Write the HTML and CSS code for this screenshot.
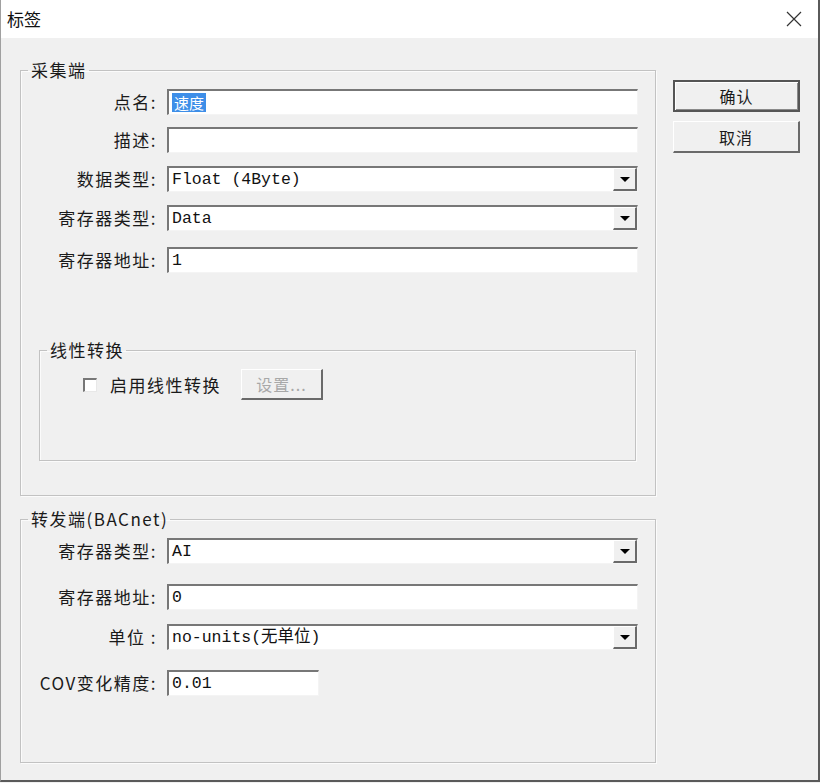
FILE: index.html
```html
<!DOCTYPE html>
<html lang="zh-CN">
<head>
<meta charset="utf-8">
<title>标签</title>
<link rel="stylesheet" href="styles.css">
</head>
<body>
<div class="window">
  <div class="titlebar">
    <span class="title">标签</span>
    <svg class="close" width="16" height="16" viewBox="0 0 16 16"><path d="M1 1 L15 15 M15 1 L1 15" stroke="#333" stroke-width="1.2" fill="none"/></svg>
  </div>
  <div class="content">
    <div class="main">
      <fieldset class="group g1">
        <legend>采集端</legend>
        <div class="rows rows1">
          <label class="lbl">点名:</label>
          <div class="field"><span class="sel">速度</span></div>
          <label class="lbl">描述:</label>
          <div class="field"></div>
          <label class="lbl">数据类型:</label>
          <div class="field combo"><span class="val">Float (4Byte)</span><span class="drop"><i class="tri"></i></span></div>
          <label class="lbl">寄存器类型:</label>
          <div class="field combo"><span class="val">Data</span><span class="drop"><i class="tri"></i></span></div>
          <label class="lbl">寄存器地址:</label>
          <div class="field"><span class="val">1</span></div>
        </div>
        <fieldset class="group inner">
          <legend>线性转换</legend>
          <div class="checkrow">
            <span class="checkbox"></span>
            <span class="checklabel">启用线性转换</span>
            <span class="btn disabled">设置...</span>
          </div>
        </fieldset>
      </fieldset>
      <fieldset class="group g2">
        <legend>转发端(BACnet)</legend>
        <div class="rows rows2">
          <label class="lbl">寄存器类型:</label>
          <div class="field combo"><span class="val">AI</span><span class="drop"><i class="tri"></i></span></div>
          <label class="lbl">寄存器地址:</label>
          <div class="field"><span class="val">0</span></div>
          <label class="lbl">单位 :</label>
          <div class="field combo"><span class="val">no-units(无单位)</span><span class="drop"><i class="tri"></i></span></div>
          <label class="lbl">COV变化精度:</label>
          <div class="field short"><span class="val">0.01</span></div>
        </div>
      </fieldset>
    </div>
    <div class="side">
      <span class="btn default">确认</span>
      <span class="btn">取消</span>
    </div>
  </div>
</div>
</body>
</html>
```

FILE: styles.css
```css
* { box-sizing: border-box; }
html, body { margin: 0; padding: 0; background: #f0f0f0; }
body {
  font-family: "Noto Sans CJK SC", "Noto Sans", sans-serif;
  color: #1a1a1a;
}
.window {
  width: 820px;
  height: 782px;
  border-left: 1px solid #a0a0a0;
  border-right: 2px solid #5a5a5a;
  border-bottom: 2px solid #5a5a5a;
  background: #f0f0f0;
  display: flex;
  flex-direction: column;
}
.titlebar {
  height: 38px;
  background: #ffffff;
  display: flex;
  align-items: center;
  justify-content: space-between;
  padding: 0 16px 0 6px;
  flex: none;
}
.title { font-size: 17px; line-height: 20px; color: #111; }
.close { display: block; }
.content {
  display: flex;
  padding-left: 19px;
  padding-top: 22px;
}
.main { width: 636px; flex: none; }
.group {
  margin: 0;
  padding: 0;
  border: 1px solid #c2c2c2;
  box-shadow: inset 1px 1px 0 #fbfbfb, 1px 1px 0 #fbfbfb;
  min-width: 0;
}
.group legend {
  margin-left: 7px;
  padding: 0 2px 0 3px;
  font-size: 17px;
  line-height: 20px;
  letter-spacing: 1.5px;
  color: #1a1a1a;
}
.g1 { height: 436px; }
.g2 { height: 254px; margin-top: 13px; }
.rows {
  display: grid;
  grid-template-columns: 136px 471px;
  column-gap: 10px;
  align-items: start;
}
.rows1 { padding-top: 9px; grid-template-rows: 38px 39px 39px 42px 26px; }
.rows2 { padding-top: 9px; grid-template-rows: 46px 40px 46px 26px; }
.lbl {
  text-align: right;
  font-size: 17px;
  line-height: 26px;
  letter-spacing: 1.5px;
  color: #1a1a1a;
  white-space: pre;
  margin-right: 0;
}
.field {
  height: 26px;
  background: #fff;
  border-top: 2px solid #777;
  border-left: 2px solid #777;
  border-bottom: 1px solid #f4f4f4;
  border-right: 1px solid #f4f4f4;
  display: flex;
  align-items: center;
  padding-left: 3px;
  position: relative;
  font-family: "Liberation Mono", "Noto Sans CJK SC", monospace;
  font-size: 16.5px;
  color: #111;
}
.field.short { width: 152px; }
.val { white-space: pre; line-height: 20px; }
.sel {
  background: #3d8ee8;
  color: #fff;
  font-family: "Noto Sans CJK SC", sans-serif;
  font-size: 15px;
  line-height: 19px;
  padding: 0 2px;
}
.combo { padding-right: 0; }
.drop {
  margin-left: auto;
  width: 24px;
  height: 23px;
  background: #f0f0f0;
  border-top: 1px solid #fff;
  border-left: 1px solid #fff;
  border-right: 2px solid #6a6a6a;
  border-bottom: 2px solid #6a6a6a;
  display: flex;
  align-items: center;
  justify-content: center;
}
.tri {
  display: block;
  width: 0;
  height: 0;
  border-left: 5px solid transparent;
  border-right: 5px solid transparent;
  border-top: 5px solid #000;
}
.inner {
  margin: 67px 19px 0 18px;
  height: 121px;
}
.checkrow {
  display: flex;
  align-items: center;
  padding-left: 43px;
  padding-top: 9px;
}
.checkbox {
  width: 14px;
  height: 14px;
  background: #fff;
  border-top: 2px solid #777;
  border-left: 2px solid #777;
  border-right: 1px solid #e8e8e8;
  border-bottom: 1px solid #e8e8e8;
}
.checklabel {
  margin-left: 13px;
  font-size: 17px;
  line-height: 20px;
  letter-spacing: 1.5px;
}
.btn {
  display: flex;
  align-items: center;
  justify-content: center;
  background: #f0f0f0;
  border-top: 1px solid #fff;
  border-left: 1px solid #fff;
  border-right: 2px solid #6a6a6a;
  border-bottom: 2px solid #6a6a6a;
  font-size: 16px;
  letter-spacing: 1px;
  color: #1a1a1a;
}
.btn.disabled {
  margin-left: 20px;
  width: 82px;
  height: 31px;
  color: #a8a8a8;
}
.side {
  margin-left: 17px;
  padding-top: 20px;
  display: flex;
  flex-direction: column;
  gap: 9px;
}
.side .btn { width: 127px; height: 32px; }
.btn.default {
  border: 2px solid #555;
  box-shadow: inset 1px 1px 0 #fff, inset -1px -1px 0 #8a8a8a;
  height: 32px;
}
```
